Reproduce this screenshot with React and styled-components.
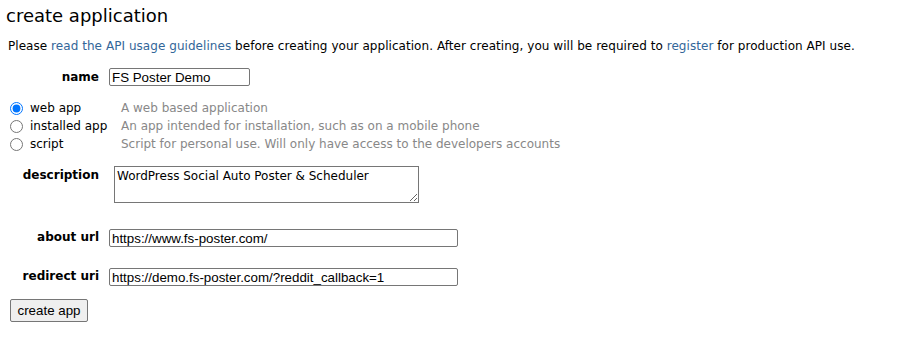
import React from 'react'
import styled, { createGlobalStyle } from 'styled-components'

const GlobalStyle = createGlobalStyle`
	html, body {
		margin: 0;
		padding: 0;
		background: #fff;
	}
	body {
		font-family: 'DejaVu Sans', Verdana, sans-serif;
		font-size: 12px;
		color: #000;
	}
`

const Page = styled.div`
	padding: 3px 8px 0 6px;
	width: 906px;
`

const Title = styled.h2`
	margin: 0;
	font-size: 18px;
	font-weight: normal;
	line-height: 26px;
	color: #000;
`

const Intro = styled.p`
	margin: 8px 0 0 2px;
	line-height: 18px;
	font-size: 12px;
	letter-spacing: 0.05px;
	color: #000;
`

const Link = styled.a`
	color: #369;
	text-decoration: none;
`

const Form = styled.form`
	display: flex;
	flex-direction: column;
	margin-top: 13px;
`

const Row = styled.div`
	display: flex;
	align-items: flex-start;
	margin-top: ${(p) => p.$top || 0}px;
`

const Label = styled.label`
	width: 93px;
	text-align: right;
	font-weight: bold;
	padding-top: ${(p) => p.$pad || 2}px;
	flex-shrink: 0;
`

const TextInput = styled.input`
	margin-left: ${(p) => p.$offset || 10}px;
	width: ${(p) => p.$width}px;
	height: 18px;
	box-sizing: border-box;
	border: 1px solid #767676;
	border-radius: 2px;
	padding: 0 2px;
	font-family: 'Liberation Sans', Arial, sans-serif;
	font-size: 13.33px;
	color: #000;
	background: #fff;
`

const TextArea = styled.textarea`
	margin-left: 15px;
	width: 305px;
	height: 37px;
	box-sizing: border-box;
	border: 1px solid #767676;
	border-radius: 0;
	padding: 2px 2px;
	font-family: 'DejaVu Sans', Verdana, sans-serif;
	font-size: 12px;
	color: #000;
	resize: both;
`

const Choices = styled.div`
	display: grid;
	grid-template-columns: 113px auto;
	grid-auto-rows: 18px;
	margin-left: 2px;
`

const Choice = styled.label`
	display: flex;
	align-items: center;
	gap: 7px;
	white-space: nowrap;
	color: #000;
`

const Radio = styled.input`
	margin: 0 0 0 2px;
	width: 13px;
	height: 13px;
	accent-color: #0075ff;
`

const Hint = styled.span`
	color: #888;
	display: flex;
	align-items: center;
`

const Submit = styled.button`
	margin: 13px 0 0 4px;
	align-self: flex-start;
	width: 78px;
	height: 23px;
	font-family: 'Liberation Sans', Arial, sans-serif;
	font-size: 13.33px;
	color: #000;
	background: #efefef;
	border: 1px solid #767676;
	border-radius: 2px;
	padding: 0;
`

const appTypes = [
	{ id: 'web', label: 'web app', hint: 'A web based application', checked: true },
	{ id: 'installed', label: 'installed app', hint: 'An app intended for installation, such as on a mobile phone' },
	{ id: 'script', label: 'script', hint: 'Script for personal use. Will only have access to the developers accounts' },
]

const App = () => {
	return (
		<>
			<GlobalStyle />
			<Page>
				<Title>create application</Title>
				<Intro>
					Please <Link href="#">read the API usage guidelines</Link> before creating your application. After
					creating, you will be required to <Link href="#">register</Link> for production API use.
				</Intro>
				<Form onSubmit={(e) => e.preventDefault()}>
					<Row>
						<Label $pad={2}>name</Label>
						<TextInput $width={141} defaultValue={'FS Poster Demo'} />
					</Row>
					<Row $top={13}>
						<Choices>
							{appTypes.map((t) => (
								<React.Fragment key={t.id}>
									<Choice>
										<Radio type="radio" name="app_type" defaultChecked={t.checked} />
										{t.label}
									</Choice>
									<Hint>{t.hint}</Hint>
								</React.Fragment>
							))}
						</Choices>
					</Row>
					<Row $top={13}>
						<Label $pad={0}>description</Label>
						<TextArea defaultValue={'WordPress Social Auto Poster & Scheduler'} />
					</Row>
					<Row $top={26}>
						<Label $pad={1}>about url</Label>
						<TextInput $width={349} defaultValue={'https://www.fs-poster.com/'} />
					</Row>
					<Row $top={21}>
						<Label $pad={1}>redirect uri</Label>
						<TextInput $width={349} defaultValue={'https://demo.fs-poster.com/?reddit_callback=1'} />
					</Row>
					<Submit type="submit">create app</Submit>
				</Form>
			</Page>
		</>
	)
}

export default App
